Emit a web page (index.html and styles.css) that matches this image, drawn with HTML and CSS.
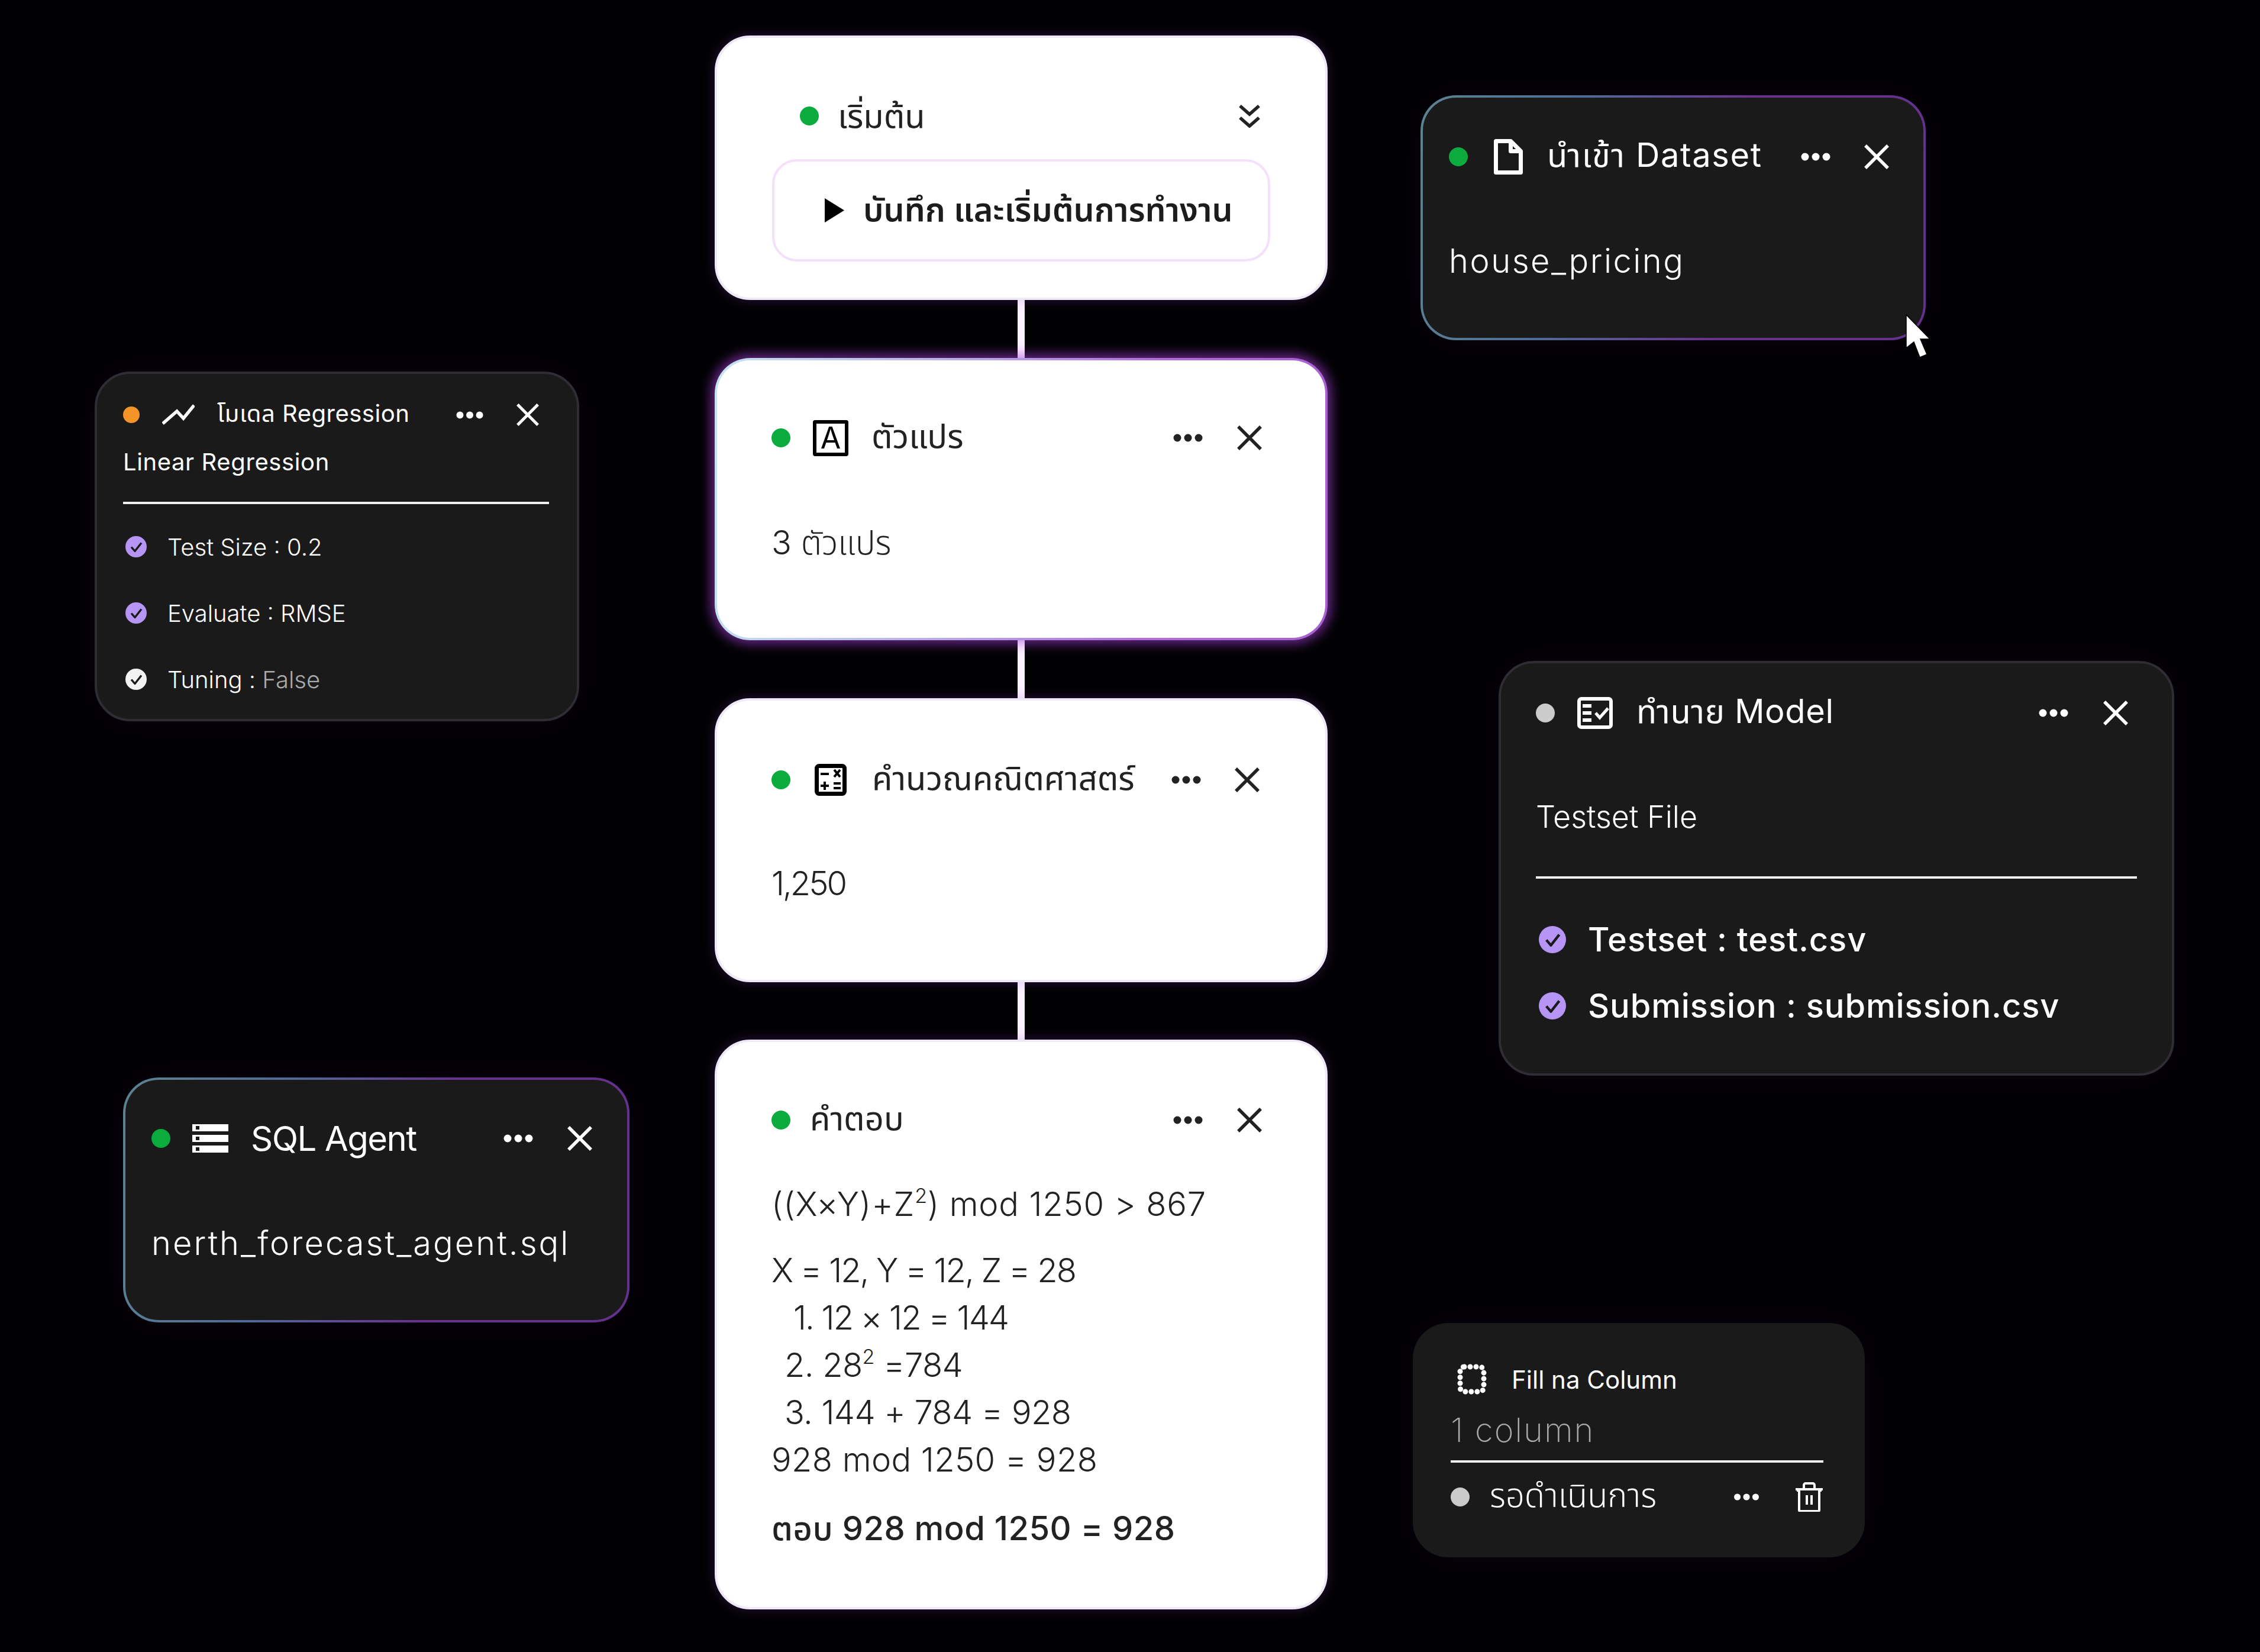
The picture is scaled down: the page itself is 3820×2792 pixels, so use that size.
FILE: index.html
```html
<!DOCTYPE html>
<html lang="th">
<head>
<meta charset="utf-8">
<title>Workflow</title>
<link rel="stylesheet" href="styles.css">
</head>
<body>
<svg class="defs" aria-hidden="true">
  <symbol id="i-more" viewBox="0 0 50 14"><circle cx="7" cy="7" r="6.5" fill="currentColor"/><circle cx="25" cy="7" r="6.5" fill="currentColor"/><circle cx="43" cy="7" r="6.5" fill="currentColor"/></symbol>
  <symbol id="i-x" viewBox="0 0 42 42"><path d="M2 2 40 40M40 2 2 40" fill="none" stroke="currentColor" stroke-width="5.5"/></symbol>
  <symbol id="i-check" viewBox="0 0 36 36"><circle cx="18" cy="18" r="18" fill="currentColor"/><path d="M10 18.5l6 7 11-14" fill="none" stroke="#1a1a1a" stroke-width="3.4" stroke-linejoin="round"/></symbol>
</svg>

<main class="canvas">
  <div class="wire"></div>

  <section class="node light n-start">
    <div class="head">
      <span class="dot green"></span>
      <span class="title">เริ่มต้น</span>
      <svg class="ico-chev" viewBox="0 0 36 40"><path d="M2 3 18 17 34 3M2 23l16 14 16-14" fill="none" stroke="currentColor" stroke-width="5.5"/></svg>
    </div>
    <div class="run-btn">
      <svg class="ico-play" viewBox="0 0 33 41"><path d="M0 0 33 20.5 0 41z" fill="#000"/></svg>
      <span class="run-label">บันทึก และเริ่มต้นการทำงาน</span>
    </div>
  </section>

  <section class="node light n-var">
    <div class="head">
      <span class="dot green"></span>
      <span class="ico-a">A</span>
      <span class="title">ตัวแปร</span>
      <svg class="more"><use href="#i-more"/></svg>
      <svg class="close"><use href="#i-x"/></svg>
    </div>
    <p class="value">3 ตัวแปร</p>
  </section>

  <section class="node light n-calc">
    <div class="head">
      <span class="dot green"></span>
      <svg class="ico-calc" viewBox="0 0 54 54"><rect x="3.5" y="3.5" width="47" height="47" rx="4" fill="#fff" stroke="#000" stroke-width="7"/><path d="M10 17h14M33 10l10 12M43 10 33 22M10 37h14M17 30v14M32 33h12M32 41h12" fill="none" stroke="#000" stroke-width="4"/></svg>
      <span class="title">คำนวณคณิตศาสตร์</span>
      <svg class="more"><use href="#i-more"/></svg>
      <svg class="close"><use href="#i-x"/></svg>
    </div>
    <p class="value">1,250</p>
  </section>

  <section class="node light n-answer">
    <div class="head">
      <span class="dot green"></span>
      <span class="title">คำตอบ</span>
      <svg class="more"><use href="#i-more"/></svg>
      <svg class="close"><use href="#i-x"/></svg>
    </div>
    <div class="formula">((X×Y)+Z<sup>2</sup>) mod 1250 &gt; 867</div>
    <div class="lines">
      <div class="tight-2">X = 12, Y = 12, Z = 28</div>
      <div class="step-1 tight-2">1. 12 × 12 = 144</div>
      <div class="step-n tight-1">2. 28<sup>2</sup> =784</div>
      <div class="step-n tight-1">3. 144 + 784 = 928</div>
      <div class="loose-1">928 mod 1250 = 928</div>
    </div>
    <div class="answer">ตอบ 928 mod 1250 = 928</div>
  </section>

  <section class="node dark grad n-dataset">
    <div class="head">
      <span class="dot green"></span>
      <svg class="ico-file" viewBox="0 0 49 60"><path d="M3.500 3.500h25l17 17v36h-42zM28.500 3.500v17h17" fill="none" stroke="currentColor" stroke-width="7" stroke-linejoin="round"/></svg>
      <span class="title">นำเข้า Dataset</span>
      <svg class="more"><use href="#i-more"/></svg>
      <svg class="close"><use href="#i-x"/></svg>
    </div>
    <p class="value">house_pricing</p>
  </section>
  <svg class="cursor" viewBox="0 0 42 74"><path d="M1 1V57L14 47 24 73 36 68 25 42 41 42Z" fill="#fff" stroke="#000" stroke-width="1.500"/></svg>

  <section class="node dark plain n-model">
    <div class="head">
      <span class="dot orange"></span>
      <svg class="ico-line" viewBox="0 0 55 36"><path d="M1 33 25 12l11 12L54 2" fill="none" stroke="currentColor" stroke-width="5.500"/></svg>
      <span class="title">โมเดล Regression</span>
      <svg class="more"><use href="#i-more"/></svg>
      <svg class="close"><use href="#i-x"/></svg>
    </div>
    <p class="sub">Linear Regression</p>
    <hr class="rule">
    <ul class="checks">
      <li><svg class="check lilac"><use href="#i-check"/></svg>Test Size : 0.2</li>
      <li><svg class="check lilac"><use href="#i-check"/></svg>Evaluate : RMSE</li>
      <li><svg class="check white"><use href="#i-check"/></svg>Tuning :&nbsp;<span class="muted">False</span></li>
    </ul>
  </section>

  <section class="node dark plain n-predict">
    <div class="head">
      <span class="dot grey"></span>
      <svg class="ico-form" viewBox="0 0 60 54"><rect x="3" y="3" width="54" height="48" rx="4" fill="none" stroke="currentColor" stroke-width="6"/><path d="M9 15h15M9 27h15M9 39h15" fill="none" stroke="currentColor" stroke-width="6"/><path d="M31 27l7 8 14-16" fill="none" stroke="currentColor" stroke-width="5"/></svg>
      <span class="title">ทำนาย Model</span>
      <svg class="more"><use href="#i-more"/></svg>
      <svg class="close"><use href="#i-x"/></svg>
    </div>
    <p class="sub">Testset File</p>
    <hr class="rule">
    <ul class="checks">
      <li><svg class="check lilac"><use href="#i-check"/></svg>Testset : test.csv</li>
      <li><svg class="check lilac"><use href="#i-check"/></svg>Submission : submission.csv</li>
    </ul>
  </section>

  <section class="node dark grad n-sql">
    <div class="head">
      <span class="dot green"></span>
      <svg class="ico-sql" viewBox="0 0 61 48"><path fill-rule="evenodd" d="M0 0h61v12H0zM6 3v6h6V3zM0 18h61v12H0zM6 21v6h6v-6zM0 36h61v12H0zM6 39v6h6v-6z" fill="currentColor"/></svg>
      <span class="title">SQL Agent</span>
      <svg class="more"><use href="#i-more"/></svg>
      <svg class="close"><use href="#i-x"/></svg>
    </div>
    <p class="value">nerth_forecast_agent.sql</p>
  </section>

  <section class="node dark n-fill">
    <div class="fill-head">
      <svg class="ico-dashed" viewBox="0 0 50 52"><rect x="5" y="5" width="40" height="42" rx="7" fill="none" stroke="currentColor" stroke-width="9" stroke-linecap="round" stroke-dasharray="0 10"/></svg>
      <span class="fill-title">Fill na Column</span>
    </div>
    <p class="fill-value">1 column</p>
    <hr class="rule">
    <div class="head fill-foot">
      <span class="dot grey"></span>
      <span class="title">รอดำเนินการ</span>
      <svg class="more"><use href="#i-more"/></svg>
      <svg class="ico-trash" viewBox="0 0 48 50"><path d="M1 12h46M5 12v4M43 12v4M7 12v35a2 2 0 0 0 2 2h30a2 2 0 0 0 2-2V12M15 12V5a3 3 0 0 1 3-3h12a3 3 0 0 1 3 3v7M20 22v16M28 22v16" fill="none" stroke="currentColor" stroke-width="4"/></svg>
    </div>
  </section>
</main>
</body>
</html>
```

FILE: styles.css
```css
* { box-sizing: border-box; }
html, body { margin: 0; padding: 0; background: #000; }
.defs { position: absolute; width: 0; height: 0; }

.canvas {
  position: relative;
  width: 3820px;
  height: 2792px;
  overflow: hidden;
  background: #010003;
  font-family: "Inter", "Noto Sans", "Noto Sans Thai", sans-serif;
  font-weight: 300;
}

.wire {
  position: absolute;
  left: 1720px;
  top: 490px;
  width: 12px;
  height: 1290px;
  background: #fbf3fe;
}

.node { position: absolute; border-radius: 60px; }
.node p { margin: 0; }

.light {
  background: #fff;
  color: #222;
  border: 4px solid #efe8f6;
  box-shadow: 0 0 22px rgba(150, 70, 200, .28);
}
.dark { background: #1a1a1a; color: #fff; box-shadow: 0 0 70px rgba(60, 20, 90, .16); }
.plain { border: 4px solid #2f2d33; }
.grad {
  border: 4px solid transparent;
  background:
    linear-gradient(#1a1a1a, #1a1a1a) padding-box,
    linear-gradient(100deg, #5d8490 0%, #4f6a9a 30%, #6c2f8f 62%, #64318e 100%) border-box;
}

.head { display: flex; align-items: center; }
.dot { flex: none; width: 32px; height: 32px; border-radius: 50%; }
.green { background: #0bab3e; }
.orange { background: #f39428; }
.grey { background: #cbcbcb; }
.title { white-space: nowrap; font-weight: 400; }
.more { flex: none; width: 50px; height: 14px; margin-left: auto; }
.close { flex: none; width: 42px; height: 42px; margin-left: 58px; }
.value { font-size: 56px; line-height: 80px; white-space: nowrap; }

/* center column */
.n-start { left: 1208px; top: 60px; width: 1036px; height: 447px; padding: 100px 0 0 93px; }
.n-start .head { height: 64px; padding: 0 110px 0 47px; font-size: 56px; }
.n-start .title { margin: 6px 0 0 32px; flex: 1; }
.ico-chev { width: 36px; height: 40px; }
.run-btn {
  display: flex;
  align-items: center;
  width: 842px;
  height: 173px;
  margin-top: 41px;
  padding-left: 85px;
  border: 4px solid #f3e0fa;
  border-radius: 42px;
}
.ico-play { width: 33px; height: 41px; }
.run-label { margin: 3px 0 0 32px; font-size: 55.5px; font-weight: 600; white-space: nowrap; color: #1c1c1c; }

.n-var {
  left: 1208px; top: 605px; width: 1036px; height: 477px;
  padding: 99px 107px 0 92px;
  border: 4px solid transparent;
  background:
    linear-gradient(#fff, #fff) padding-box,
    linear-gradient(95deg, #c5e4f0 0%, #b9b2e8 35%, #b06fd8 70%, #a860d0 100%) border-box;
  box-shadow: 0 0 20px 6px rgba(175, 65, 225, .62);
}
.n-var .head, .n-calc .head, .n-answer .head { height: 64px; font-size: 56px; }
.ico-a {
  flex: none;
  display: flex;
  align-items: center;
  justify-content: center;
  width: 60px;
  height: 61px;
  margin: 0 39px 0 38px;
  border: 6px solid #000;
  border-radius: 4px;
  font-size: 50px;
  font-weight: 400;
  line-height: 1;
  color: #000;
}
.n-var .value { margin-top: 105px; }

.n-calc { left: 1208px; top: 1180px; width: 1036px; height: 480px; padding: 102px 111px 0 92px; }
.ico-calc { flex: none; width: 54px; height: 54px; margin: 0 43px 0 41px; }
.n-calc .close { margin-left: 57px; }
.n-calc .value { margin-top: 103px; letter-spacing: -3px; }

.n-answer { left: 1208px; top: 1757px; width: 1036px; height: 963px; padding: 100px 107px 0 92px; color: #222; }
.n-answer .title { margin-left: 33px; }
.n-answer .more { margin-left: auto; }
.formula { margin-top: 70px; font-size: 56px; line-height: 80px; white-space: nowrap; font-weight: 300; letter-spacing: .8px; }
sup { font-size: 34px; line-height: 0; vertical-align: 22px; }
.lines { margin-top: 32px; font-size: 56px; line-height: 80px; white-space: nowrap; }
.step-1 { padding-left: 37px; }
.step-n { padding-left: 22px; }
.tight-2 { letter-spacing: -2px; }
.tight-1 { letter-spacing: -.6px; }
.loose-1 { letter-spacing: .4px; }
.answer { margin-top: 36px; font-size: 56px; line-height: 80px; font-weight: 500; white-space: nowrap; letter-spacing: .5px; }

/* floating nodes */
.n-dataset { left: 2401px; top: 161px; width: 854px; height: 414px; padding: 68px 58px 0 44px; }
.n-dataset .head { height: 64px; font-size: 56px; }
.n-dataset .title { letter-spacing: 1.6px; }
.ico-file { flex: none; width: 49px; height: 60px; margin: 0 41px 0 44px; }
.n-dataset .close { margin-left: 57px; }
.n-dataset .value { margin-top: 104px; letter-spacing: 2.5px; }

.cursor { position: absolute; left: 3221px; top: 531px; width: 42px; height: 74px; }

.n-model { left: 160px; top: 628px; width: 819px; height: 591px; padding: 47px 64px 0 44px; }
.n-model .head { height: 44px; font-size: 40px; }
.n-model .title { letter-spacing: .5px; }
.n-model .dot { width: 28px; height: 28px; }
.ico-line { flex: none; width: 55px; height: 36px; margin: 0 38px 0 38px; }
.n-model .more { width: 46px; height: 13px; }
.n-model .close { width: 38px; height: 38px; margin-left: 56px; }
.sub { white-space: nowrap; }
.n-model .sub { margin-top: 30px; font-size: 40px; line-height: 56px; font-weight: 400; letter-spacing: .6px; }
.rule { margin: 0; border: 0; height: 4px; background: #f0f0f0; }
.n-model .rule { width: 720px; margin-top: 39px; }
.checks { list-style: none; margin: 0; padding: 0; }
.checks li { display: flex; align-items: center; white-space: nowrap; }
.check { flex: none; }
.lilac { color: #b795f5; }
.white { color: #f2f2f2; }
.muted { color: #aaa; }
.n-model .checks { margin-top: 44px; font-size: 40px; }
.n-model .checks li { height: 56px; margin-bottom: 56px; }
.n-model .check { width: 36px; height: 36px; margin: 0 35px 0 4px; }

.n-predict { left: 2533px; top: 1117px; width: 1142px; height: 701px; padding: 52px 74px 0 59px; }
.n-predict .head { height: 64px; font-size: 56px; }
.n-predict .title { letter-spacing: .6px; }
.ico-form { flex: none; width: 60px; height: 54px; margin: 0 40px 0 38px; }
.n-predict .close { margin-left: 59px; }
.n-predict .sub { margin-top: 109px; font-size: 52px; line-height: 70px; }
.n-predict .rule { width: 1016px; margin-top: 65px; }
.n-predict .checks { margin-top: 68px; font-size: 56px; font-weight: 500; letter-spacing: .9px; }
.n-predict .checks li { height: 70px; margin-bottom: 42px; }
.n-predict .check { width: 46px; height: 46px; margin: 0 37px 0 5px; }

.n-sql { left: 208px; top: 1821px; width: 856px; height: 414px; padding: 67px 59px 0 44px; }
.n-sql .head { height: 64px; font-size: 58px; }
.n-sql .title { letter-spacing: -1.5px; }
.ico-sql { flex: none; width: 61px; height: 48px; margin: 0 38px 0 37px; }
.n-sql .value { margin-top: 105px; letter-spacing: 3px; }

.n-fill { left: 2388px; top: 2236px; width: 764px; height: 396px; padding: 69px 70px 0 64px; }
.fill-head { display: flex; align-items: center; height: 52px; padding-left: 11px; }
.ico-dashed { flex: none; width: 50px; height: 52px; }
.fill-title { margin-left: 42px; font-size: 42px; font-weight: 400; white-space: nowrap; }
.n-fill .fill-value { margin-top: 20px; font-size: 56px; line-height: 80px; color: #aaa; font-weight: 200; letter-spacing: 2px; }
.n-fill .rule { margin-top: 11px; }
.fill-foot { height: 64px; margin-top: 26px; font-size: 56px; }
.fill-foot .title { margin-left: 34px; font-weight: 300; }
.fill-foot .more { width: 44px; height: 12px; }
.ico-trash { flex: none; width: 48px; height: 50px; margin-left: 60px; }
```
